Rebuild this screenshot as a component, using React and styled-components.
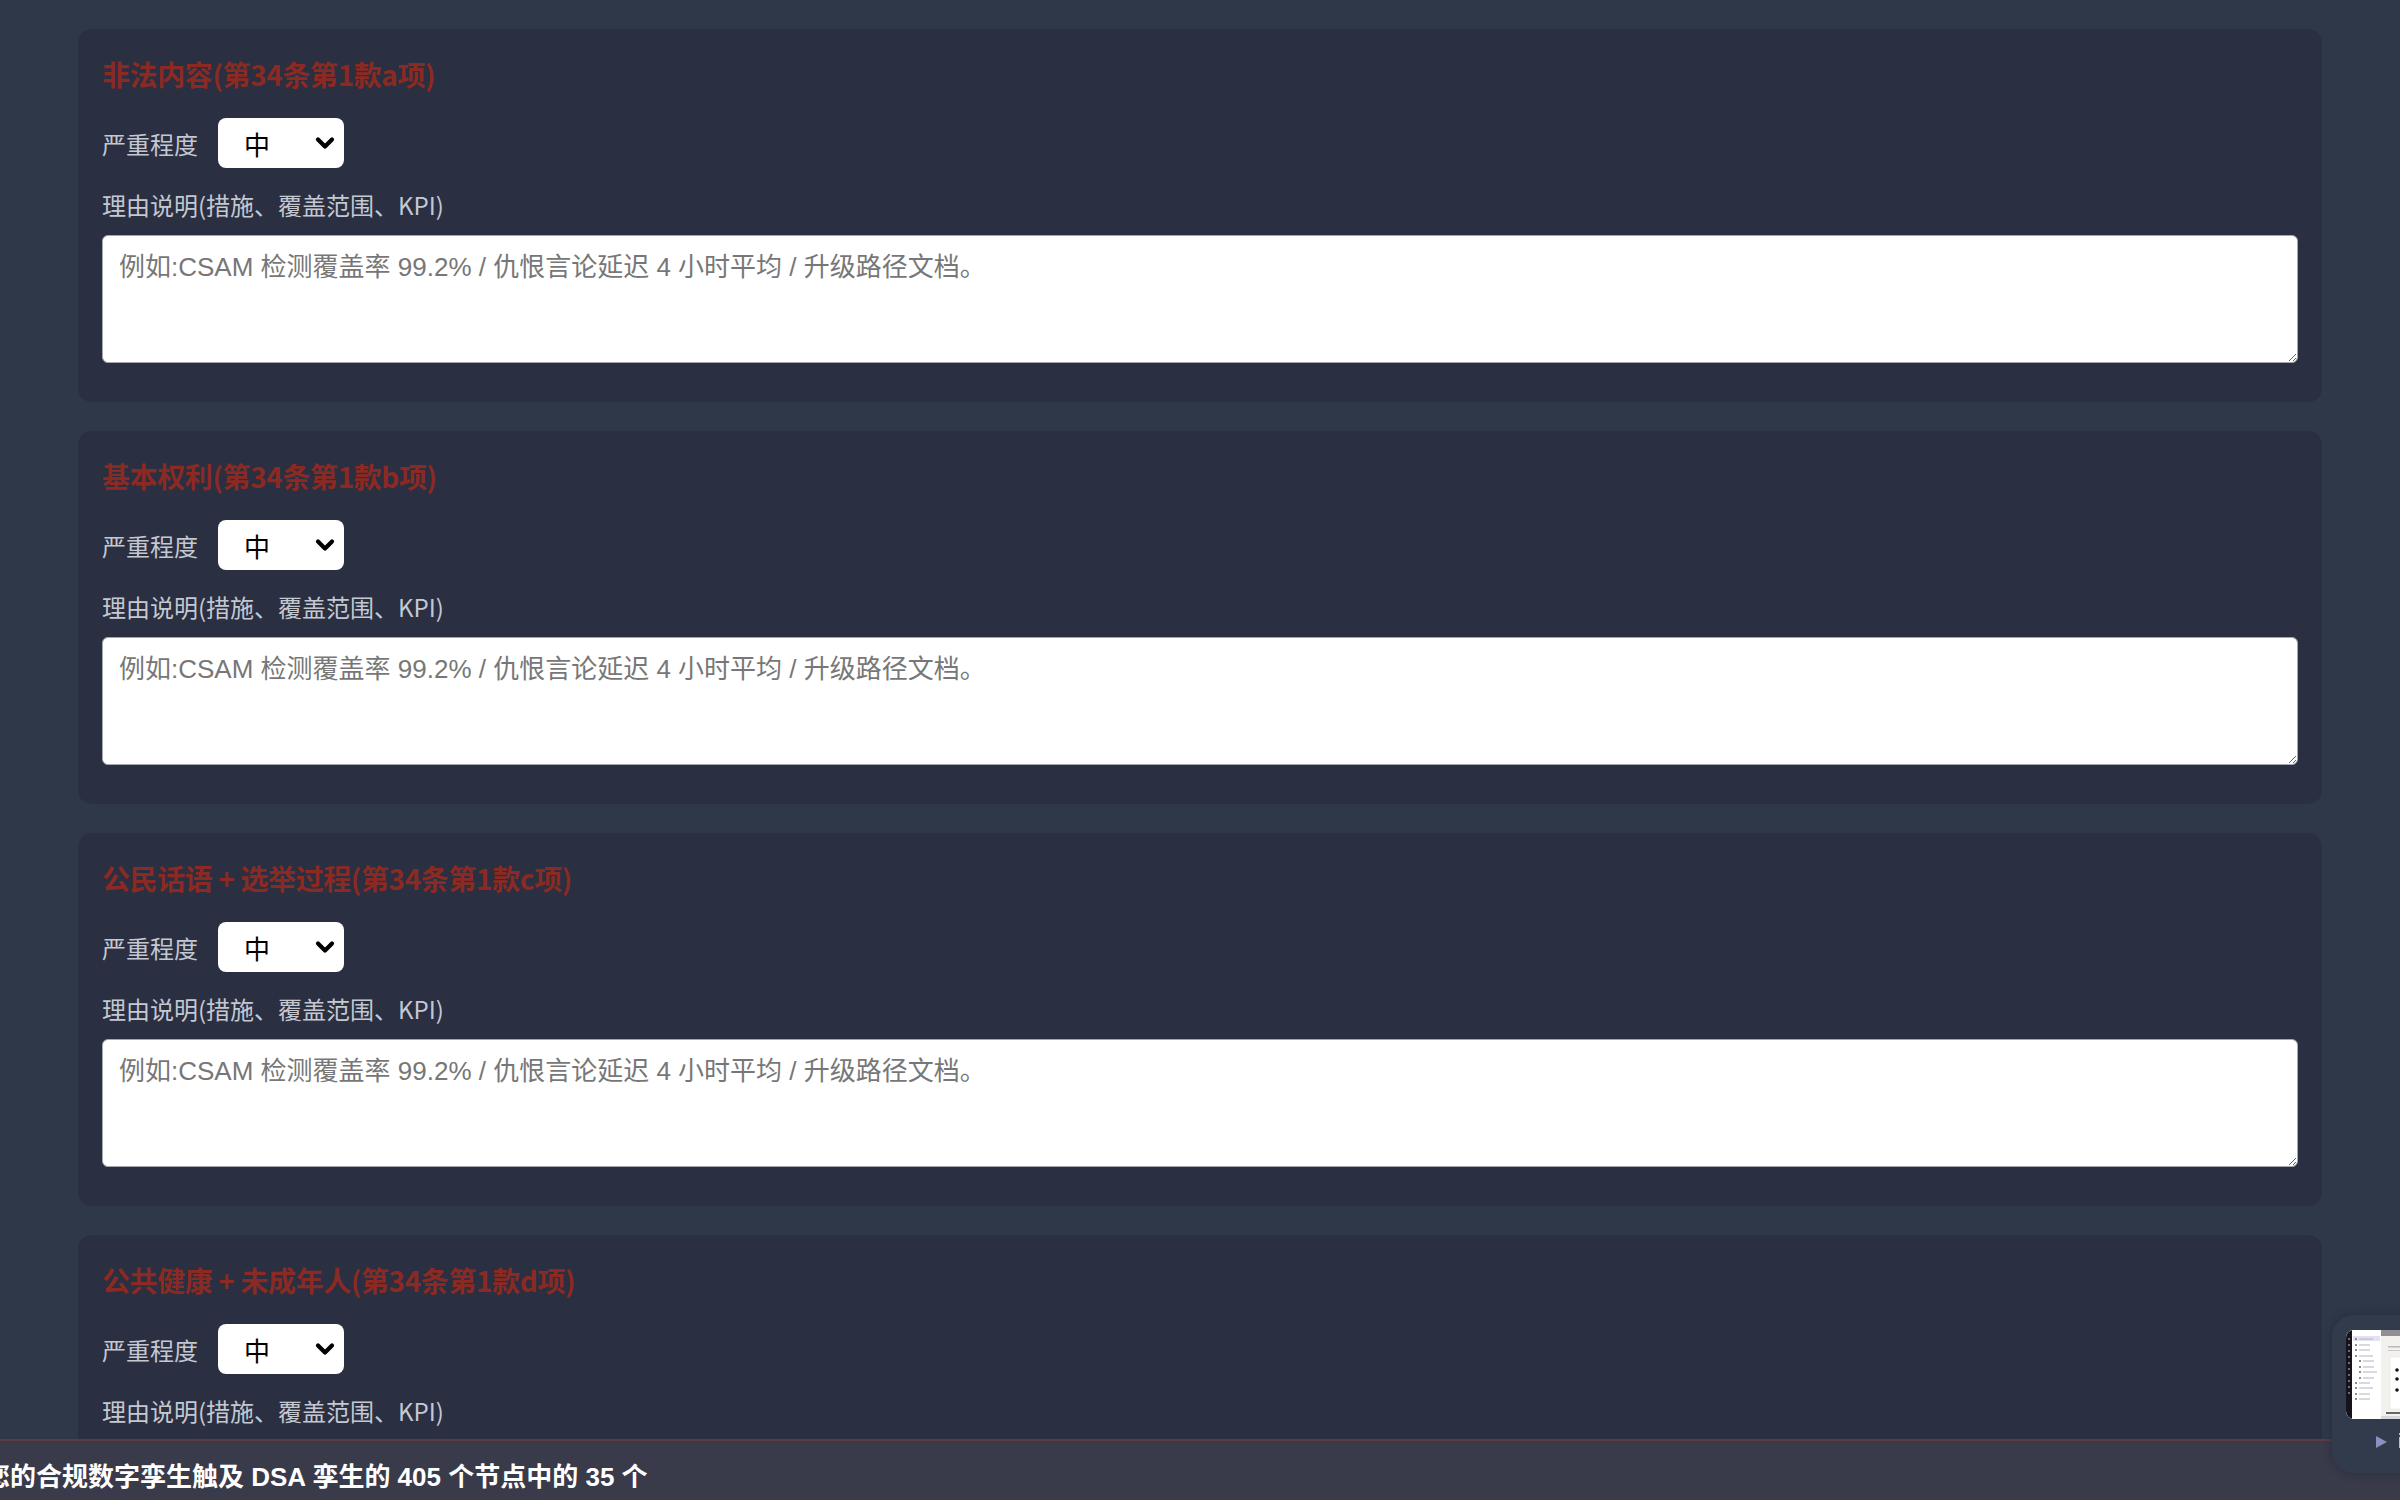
import React from "react";
import styled, { createGlobalStyle } from "styled-components";
import { ChevronDown } from "lucide-react";

const GlobalStyle = createGlobalStyle`
  html, body {
    margin: 0;
    padding: 0;
    height: 1500px;
    overflow: hidden;
    background: #2f3849;
  }
  * {
    box-sizing: border-box;
  }
`;

const cjkStack = `"Noto Sans CJK SC", "Noto Sans", sans-serif`;
const wideStack = `"Liberation Sans", "Noto Sans CJK SC", sans-serif`;

const Page = styled.div`
  width: 2400px;
  height: 1500px;
  padding: 29px 78px 0;
  background: #2f3849;
  font-family: ${cjkStack};
  display: flex;
  flex-direction: column;
  gap: 29px;
  overflow: hidden;
`;

const RiskCard = styled.section`
  flex-shrink: 0;
  background: #2a2f41;
  border-radius: 14px;
  padding: 24px 24px 39px;
  display: flex;
  flex-direction: column;
`;

const RiskTitle = styled.h3`
  margin: 0;
  font-family: ${cjkStack};
  font-size: 28px;
  font-weight: 700;
  letter-spacing: -0.4px;
  line-height: 42px;
  color: #8b2a23;
`;

const SeverityRow = styled.div`
  display: flex;
  align-items: center;
  gap: 20px;
  margin-top: 23px;
`;

const FieldLabel = styled.label`
  font-family: ${cjkStack};
  font-size: 24px;
  line-height: 35px;
  color: #c4c8d1;
`;

const SelectWrap = styled.div`
  position: relative;
  width: 126px;
  height: 50px;
`;

const SeveritySelect = styled.select`
  appearance: none;
  width: 100%;
  height: 100%;
  border: none;
  border-radius: 8px;
  background: #ffffff;
  color: #000000;
  font-family: ${cjkStack};
  font-size: 26px;
  font-weight: 400;
  padding: 0 34px 0 26px;
  outline: none;
`;

const SelectArrow = styled(ChevronDown)`
  position: absolute;
  right: 5px;
  top: 50%;
  transform: translateY(-50%);
  pointer-events: none;
  color: #000000;
`;

const ReasonLabel = styled(FieldLabel)`
  margin-top: 19px;
`;

const ReasonInput = styled.textarea`
  display: block;
  width: 100%;
  height: 128px;
  margin-top: 13px;
  padding: 14px 16px 12px;
  border: 1px solid #a4a6ad;
  border-radius: 6px;
  background: #ffffff;
  font-family: ${wideStack};
  font-size: 26px;
  line-height: 35px;
  color: #222;

  &::placeholder {
    color: #777777;
  }
`;

const CoverageBar = styled.div`
  position: fixed;
  left: 0;
  right: 0;
  bottom: 0;
  height: 61px;
  background: #393a4a;
  border-top: 2px solid #5a3c42;
  padding-top: 16px;
  overflow: hidden;
  white-space: nowrap;
`;

const CoverageText = styled.span`
  display: inline-block;
  margin-left: -16px;
  font-family: ${wideStack};
  font-size: 26px;
  font-weight: 700;
  line-height: 40px;
  color: #ffffff;
`;

const MiniPlayer = styled.div`
  position: fixed;
  left: 2332px;
  top: 1315px;
  width: 220px;
  height: 158px;
  padding: 15px 14px;
  border-radius: 22px;
  background: #323b4c;
  box-shadow: 0 0 10px rgba(20, 24, 34, 0.35);
`;

const Thumb = styled.div`
  width: 120px;
  height: 89px;
  border-radius: 8px;
  overflow: hidden;
  background: #f3f2ef;
`;

const PlayerRow = styled.div`
  display: flex;
  align-items: center;
  gap: 11px;
  margin-top: 11px;
  padding-left: 30px;
  font-family: ${wideStack};
  font-size: 20px;
  font-weight: 700;
  color: #ffffff;
`;

const risks = [
  "非法内容(第34条第1款a项)",
  "基本权利(第34条第1款b项)",
  "公民话语 + 选举过程(第34条第1款c项)",
  "公共健康 + 未成年人(第34条第1款d项)",
];

// tiny preview of the recorded app: icon rail, nav list, header, content pane
const ThumbShot = () => (
  <svg width="120" height="89" viewBox="0 0 120 89">
    <rect x="0" y="0" width="120" height="89" fill="#f2f1ee" />
    <rect x="0" y="0" width="6" height="89" fill="#15141c" />
    {[8, 14, 20, 26, 32, 38, 44, 50, 56, 62].map((y) => (
      <rect key={y} x="2" y={y} width="2" height="2" fill="#6a6a80" />
    ))}
    <rect x="6" y="0" width="29" height="89" fill="#ffffff" />
    <rect x="7" y="6" width="27" height="5" fill="#e4e2f2" />
    {[8, 14, 19, 25, 30, 36, 41, 47, 52, 57, 63, 68].map((y, i) => (
      <g key={y}>
        <rect x={i > 3 && i < 8 ? 13 : 9} y={y} width="2" height="2" fill="#8a8a96" />
        <rect x={i > 3 && i < 8 ? 17 : 13} y={y + 0.5} width={i % 3 === 0 ? 14 : 11} height="1" fill="#b4b4bc" />
      </g>
    ))}
    <rect x="35" y="0" width="85" height="6" fill="#8f8f94" />
    <rect x="42" y="16" width="30" height="1.5" fill="#b8b8be" />
    <rect x="42" y="20" width="22" height="1" fill="#cacace" />
    <rect x="44" y="27" width="60" height="52" fill="#ffffff" stroke="#e0e0e0" strokeWidth="0.5" />
    <circle cx="51" cy="40" r="1.8" fill="#111" />
    <circle cx="51" cy="49" r="1.8" fill="#111" />
    <circle cx="51" cy="60" r="1.8" fill="#111" />
    <rect x="40" y="82" width="14" height="2" fill="#666" />
    <rect x="35" y="86" width="40" height="3" fill="#d8d8dc" />
  </svg>
);

const PlayIcon = () => (
  <svg width="11" height="12" viewBox="0 0 11 12">
    <path d="M0 0 L11 6 L0 12 Z" fill="#8c8fc2" />
  </svg>
);

const App = () => {
  return (
    <>
      <GlobalStyle />
      <Page>
        {risks.map((title) => (
          <RiskCard key={title}>
            <RiskTitle>{title}</RiskTitle>
            <SeverityRow>
              <FieldLabel>严重程度</FieldLabel>
              <SelectWrap>
                <SeveritySelect defaultValue="中">
                  <option value="低">低</option>
                  <option value="中">中</option>
                  <option value="高">高</option>
                </SeveritySelect>
                <SelectArrow size={28} strokeWidth={3.6} />
              </SelectWrap>
            </SeverityRow>
            <ReasonLabel>理由说明(措施、覆盖范围、KPI)</ReasonLabel>
            <ReasonInput placeholder="例如:CSAM 检测覆盖率 99.2% / 仇恨言论延迟 4 小时平均 / 升级路径文档。" />
          </RiskCard>
        ))}
      </Page>
      <CoverageBar>
        <CoverageText>您的合规数字孪生触及 DSA 孪生的 405 个节点中的 35 个</CoverageText>
      </CoverageBar>
      <MiniPlayer>
        <Thumb>
          <ThumbShot />
        </Thumb>
        <PlayerRow>
          <PlayIcon />
          <span>intro</span>
        </PlayerRow>
      </MiniPlayer>
    </>
  );
};

export default App;
